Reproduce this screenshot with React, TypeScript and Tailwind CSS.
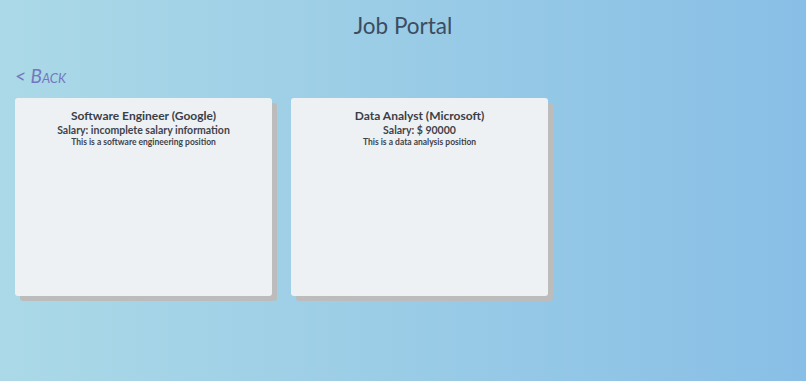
const jobs = [
  {
    title: 'Software Engineer (Google)',
    salary: 'Salary: incomplete salary information',
    description: 'This is a software engineering position',
  },
  {
    title: 'Data Analyst (Microsoft)',
    salary: 'Salary: $ 90000',
    description: 'This is a data analysis position',
  },
];

const App = () => {
  return (
    <div className="min-h-screen w-full bg-gradient-to-r from-[#abd9e7] to-[#89bfe6] font-['Lato',sans-serif] text-[#3b4350]">
      <h1 className="pt-[10px] text-center text-[22.5px] leading-[32px] font-normal text-[#3b4d60]">Job Portal</h1>

      <div className="mt-[23px] px-[15px]">
        <button className="text-[19px] leading-[20px] italic text-[#7377c0] [font-variant:small-caps]">
          &lt; Back
        </button>
      </div>

      <div className="mt-[9px] flex gap-[19px] px-[15px]">
        {jobs.map(job => (
          <div
            key={job.title}
            className="h-[198px] w-[257px] rounded-[3px] bg-[#eef1f4] pt-[10px] text-center shadow-[5px_5px_0_#bcbcbc]"
          >
            <h2 className="text-[12px] leading-[16px] font-bold text-[#3a3f47]">{job.title}</h2>
            <p className="text-[10.5px] leading-[13px] font-bold text-[#3f434a]">{job.salary}</p>
            <p className="text-[8.5px] leading-[11px] font-bold text-[#3f434a]">{job.description}</p>
          </div>
        ))}
      </div>
    </div>
  );
};

export default App;
